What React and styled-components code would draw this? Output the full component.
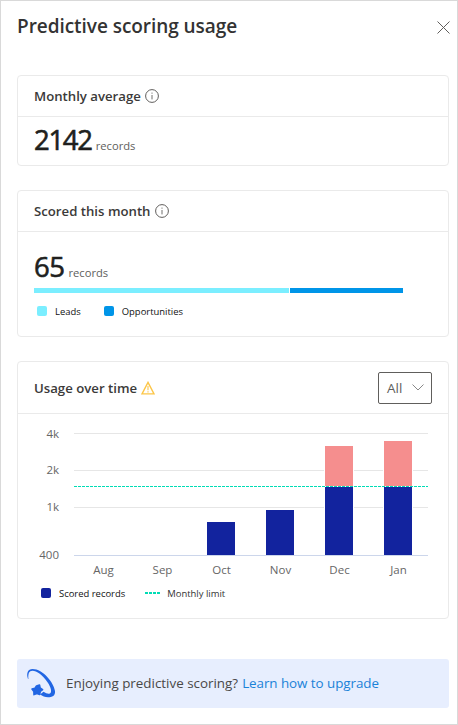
import React from 'react';
import styled, { createGlobalStyle } from 'styled-components';

const Global = createGlobalStyle`
  * { box-sizing: border-box; }
  body { margin: 0; background: #fff; font-family: "Open Sans", "Noto Sans", sans-serif; }
`;

const Panel = styled.main`
  display: flex;
  flex-direction: column;
  width: 458px;
  height: 725px;
  padding: 0 8px 0 16px;
  border: 1px solid #d9d9d9;
  background: #fff;
`;

const Header = styled.header`
  display: flex;
  align-items: center;
  justify-content: space-between;
  height: 50px;
  margin-bottom: 24px;
`;

const Title = styled.h1`
  margin: 0;
  color: #333;
  font-size: 19px;
  font-weight: 600;
  line-height: 26px;
  letter-spacing: -0.05px;
`;

const IconButton = styled.button`
  display: flex;
  padding: 0;
  margin: 3px -1px 0 0;
  border: 0;
  background: none;
`;

const Card = styled.section`
  display: flex;
  flex-direction: column;
  height: ${(p) => p.$height}px;
  margin-bottom: ${(p) => p.$gap}px;
  border: 1px solid #eaeaea;
  border-radius: 4px;
`;

const CardHeader = styled.div`
  display: flex;
  flex: none;
  align-items: center;
  height: ${(p) => p.$height}px;
  padding: 0 16px;
  border-bottom: 1px solid #eaeaea;
`;

const CardTitle = styled.h2`
  margin: 0 4px 0 0;
  color: #3b3a39;
  font-size: 13.2px;
  font-weight: 600;
  line-height: 20px;
`;

const Metric = styled.div`
  display: flex;
  align-items: baseline;
  gap: 4px;
  height: 40px;
  margin-top: ${(p) => p.$top}px;
  padding-left: 16px;
  line-height: 40px;
`;

const Value = styled.span`
  color: #201f1e;
  font-size: 27.5px;
  font-weight: 400;
  -webkit-text-stroke: 0.6px #201f1e;
  letter-spacing: ${(p) => p.$tracking}px;
`;

const Unit = styled.span`
  color: #605e5c;
  font-size: 11.2px;
`;

const SplitBar = styled.div`
  display: grid;
  grid-template-columns: 255px 113px;
  gap: 1px;
  height: 5px;
  margin: 1px 0 0 16px;
`;

const Segment = styled.div`
  background: ${(p) => p.$color};
`;

const Legend = styled.div`
  display: flex;
  align-items: center;
  height: 14px;
  margin: ${(p) => p.$top}px 0 0 ${(p) => p.$left}px;
  gap: ${(p) => p.$gap}px;
`;

const LegendItem = styled.div`
  display: flex;
  align-items: center;
  gap: ${(p) => p.$gap || 8}px;
  height: 14px;
`;

const LegendLabel = styled.span`
  padding-top: 2px;
  color: ${(p) => p.$color || '#111'};
  font-size: 9.45px;
  line-height: 14px;
  white-space: nowrap;
`;

const Swatch = styled.span`
  width: 10px;
  height: 10px;
  border-radius: 2px;
  background: ${(p) => p.$color};
`;

const Select = styled.button`
  display: flex;
  align-items: center;
  justify-content: space-between;
  width: 54px;
  height: 32px;
  margin-left: auto;
  padding: 0 7px 0 8px;
  border: 1px solid #605e5c;
  border-radius: 2px;
  background: #fff;
  color: #605e5c;
  font: 400 13.5px "Open Sans", sans-serif;
`;

const Chart = styled.svg`
  display: block;
  flex: none;
  font: 11.5px "Open Sans", sans-serif;
  fill: #666;
`;

const Banner = styled.aside`
  display: flex;
  align-items: center;
  height: 49px;
  padding-left: 9px;
  border-radius: 3px;
  background: #e7eefe;
  color: #494847;
  font-size: 13.4px;
  white-space: nowrap;
`;

const BannerText = styled.span`
  margin: 0 4px 0 9px;
  padding-bottom: 2px;
`;

const Link = styled.a`
  padding-bottom: 2px;
  color: #1a82d8;
  letter-spacing: -0.05px;
`;

const InfoIcon = () => (
  <svg width="14" height="14" viewBox="0 0 14 14" fill="none" stroke="#605e5c">
    <circle cx="7" cy="7" r="6.4" strokeWidth="1" />
    <path d="M7 6v4.4M7 3.6v1.1" strokeWidth="0.9" />
  </svg>
);

const WarningIcon = () => (
  <svg width="14" height="14" viewBox="0 0 14 14" fill="none" stroke="#fcc649">
    <path d="M7 1.4 13 12.9H1Z" strokeWidth="1.4" />
    <path d="M7 5v4.3M7 10.2v1.2" strokeWidth="1.1" />
  </svg>
);

const StarIcon = () => (
  <svg width="31" height="31" viewBox="0 0 31 31" fill="#2266e3">
    <path d="M2 11C0 5 2 1 6.5 1 17 1 28 15 29 23c.5 5-3 6.2-7 6.2-3 0-5.5-1-8-2.6l3.5-2.8c2.5 1.5 4.8 2.4 6.3 1.7 2.5-1.3 1.2-6.3-2.3-11.3C17 7.2 10.5 2.8 6.5 2.8 3 2.8 2 5.7 2.4 11Z" />
    <path d="m14 16.8.6 3 2.5 1.6-2.3 1.8-.6 3-2.8-1-2.9 1.2-.1-3.1-1.9-2.4 3-.8 1.5-2.3Z" transform="translate(-.5 .2)" stroke="#2266e3" strokeWidth="1.6" strokeLinejoin="round" />
  </svg>
);

const GRID = [
  { label: '4k', y: 19.5, base: 24 },
  { label: '2k', y: 56.5, base: 60 },
  { label: '1k', y: 93.5, base: 97 },
];
const MONTHS = ['Aug', 'Sep', 'Oct', 'Nov', 'Dec', 'Jan'];
const BARS = [
  { x: 189, top: 108 },
  { x: 248, top: 96 },
  { x: 307, top: 73, over: 32 },
  { x: 366, top: 73, over: 27 },
];

const UsageChart = () => (
  <Chart width="430" height="168" viewBox="0 0 430 168">
    {GRID.map((g) => (
      <g key={g.label}>
        <path d={`M56 ${g.y}H410`} stroke="#e6e6e6" />
        <text x="41" y={g.base} textAnchor="end">{g.label}</text>
      </g>
    ))}
    {BARS.map((b) => (
      <g key={b.x}>
        <rect x={b.x - 1} y={(b.over || b.top) - 1} width="30" height={142 - (b.over || b.top)} fill="#fff" />
        {b.over && <rect x={b.x} y={b.over} width="28" height={72 - b.over} fill="#f58e8e" />}
        <rect x={b.x} y={b.top} width="28" height={141 - b.top} fill="#12239e" />
      </g>
    ))}
    <path d="M56 141.5H410" stroke="#ccd6eb" />
    <text x="41" y="145" textAnchor="end">400</text>
    <path d="M56 72.5H410" stroke="#01dcb5" strokeDasharray="3 1" />
    {MONTHS.map((m, i) => (
      <text key={m} x={85.5 + i * 59} y="160" textAnchor="middle">{m}</text>
    ))}
  </Chart>
);

export default function App() {
  return (
    <Panel>
      <Global />
      <Header>
        <Title>Predictive scoring usage</Title>
        <IconButton aria-label="Close">
          <svg width="13" height="13" viewBox="0 0 13 13" stroke="#605e5c" fill="none">
            <path d="m.5.5 12 12M12.5.5l-12 12" />
          </svg>
        </IconButton>
      </Header>
      <Card $height={91} $gap={24}>
        <CardHeader $height={41}>
          <CardTitle>Monthly average</CardTitle>
          <InfoIcon />
        </CardHeader>
        <Metric $top={3}>
          <Value $tracking={-1.3}>2142</Value>
          <Unit>records</Unit>
        </Metric>
      </Card>
      <Card $height={147} $gap={24}>
        <CardHeader $height={41}>
          <CardTitle>Scored this month</CardTitle>
          <InfoIcon />
        </CardHeader>
        <Metric $top={15}>
          <Value $tracking={-0.5}>65</Value>
          <Unit>records</Unit>
        </Metric>
        <SplitBar>
          <Segment $color="#7beeff" />
          <Segment $color="#0095e8" />
        </SplitBar>
        <Legend $top={11} $left={19} $gap={23}>
          <LegendItem>
            <Swatch $color="#7beeff" />
            <LegendLabel>Leads</LegendLabel>
          </LegendItem>
          <LegendItem>
            <Swatch $color="#0095e8" />
            <LegendLabel>Opportunities</LegendLabel>
          </LegendItem>
        </Legend>
      </Card>
      <Card $height={258} $gap={40}>
        <CardHeader $height={52}>
          <CardTitle>Usage over time</CardTitle>
          <WarningIcon />
          <Select>
            All
            <svg width="12" height="7" viewBox="0 0 12 7" fill="none" stroke="#888">
              <path d="m.5.5 5.5 5.5L11.5.5" />
            </svg>
          </Select>
        </CardHeader>
        <UsageChart />
        <Legend $top={4} $left={23} $gap={20}>
          <LegendItem>
            <Swatch $color="#12239e" />
            <LegendLabel>Scored records</LegendLabel>
          </LegendItem>
          <LegendItem $gap={7}>
            <svg width="15" height="2" viewBox="0 0 15 2">
              <path d="M0 1h15" stroke="#01dcb5" strokeWidth="2" strokeDasharray="3 1" />
            </svg>
            <LegendLabel $color="#333">Monthly limit</LegendLabel>
          </LegendItem>
        </Legend>
      </Card>
      <Banner>
        <StarIcon />
        <BannerText>Enjoying predictive scoring?</BannerText>
        <Link>Learn how to upgrade</Link>
      </Banner>
    </Panel>
  );
}
